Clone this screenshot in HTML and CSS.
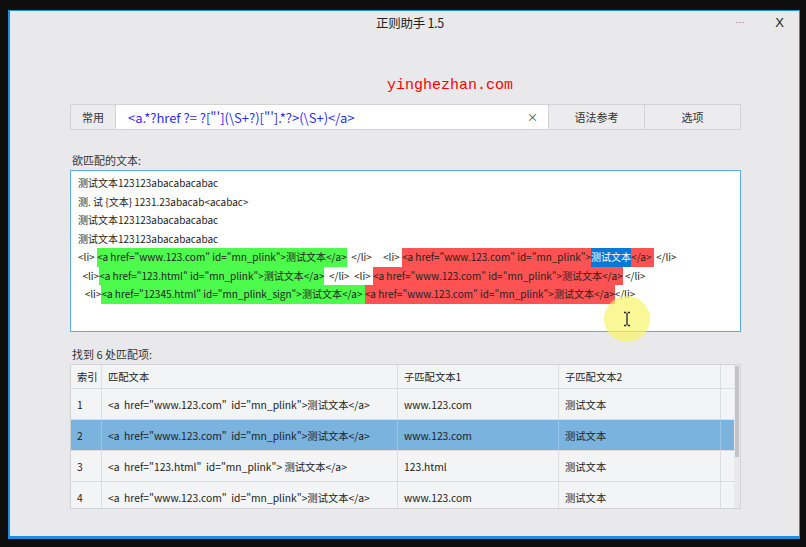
FILE: index.html
```html
<!DOCTYPE html>
<html lang="zh-CN">
<head>
<meta charset="utf-8">
<title>正则助手 1.5</title>
<link rel="stylesheet" href="styles.css">
</head>
<body>
<div class="window">
  <div class="titlebar">
    <div></div>
    <div class="title">正则助手 1.5</div>
    <div class="controls"><span class="min">…</span><span class="close">X</span></div>
  </div>
  <div class="content">
    <div class="watermark">yinghezhan.com</div>
    <div class="toolbar">
      <div class="btn btn-common">常用</div>
      <div class="pattern"><span class="pattern-text">&lt;a.*?href ?= ?["'](\S+?)["'].*?&gt;(\S+)&lt;/a&gt;</span><span class="clear">×</span></div>
      <div class="btn btn-ref">语法参考</div>
      <div class="btn btn-opt">选项</div>
    </div>
    <div class="label">欲匹配的文本:</div>
    <div class="editor">
      <div class="line"><span class="seg">测试文本123123abacabacabac</span></div>
      <div class="line"><span class="seg">测. 试 {文本} 1231.23abacab&lt;acabac&gt;</span></div>
      <div class="line"><span class="seg">测试文本123123abacabacabac</span></div>
      <div class="line"><span class="seg">测试文本123123abacabacabac</span></div>
      <div class="line"><span class="seg">&lt;li&gt; </span><span class="seg green">&lt;a href="www.123.com" id="mn_plink"&gt;测试文本&lt;/a&gt;</span><span class="seg">  &lt;/li&gt;     &lt;li&gt; </span><span class="seg red">&lt;a href="www.123.com" id="mn_plink"&gt;</span><span class="seg sel">测试文本</span><span class="seg red">&lt;/a&gt; </span><span class="seg"> &lt;/li&gt;</span></div>
      <div class="line"><span class="seg">  &lt;li&gt;</span><span class="seg green">&lt;a href="123.html" id="mn_plink"&gt;测试文本&lt;/a&gt;</span><span class="seg">  &lt;/li&gt;  &lt;li&gt; </span><span class="seg red">&lt;a href="www.123.com" id="mn_plink"&gt;测试文本&lt;/a&gt;</span><span class="seg"> &lt;/li&gt;</span></div>
      <div class="line"><span class="seg">   &lt;li&gt;</span><span class="seg green">&lt;a href="12345.html" id="mn_plink_sign"&gt;测试文本&lt;/a&gt; </span><span class="seg red">&lt;a href="www.123.com" id="mn_plink"&gt;测试文本&lt;/a&gt;</span><span class="seg">&lt;/li&gt;</span></div>
      <div class="halo">
        <svg class="ibeam" width="8" height="16" viewBox="0 0 8 16"><path d="M1 1.5h2.2M4.8 1.5H7M4 2v12M1 14.5h2.2M4.8 14.5H7" stroke="#222" stroke-width="1.3" fill="none"/></svg>
      </div>
    </div>
    <div class="label label-found">找到 6 处匹配项:</div>
    <div class="table">
      <div class="grid">
        <div class="row head"><div class="cell">索引</div><div class="cell">匹配文本</div><div class="cell">子匹配文本1</div><div class="cell">子匹配文本2</div><div class="cell"></div></div>
        <div class="row"><div class="cell">1</div><div class="cell">&lt;a  href="www.123.com"  id="mn_plink"&gt;测试文本&lt;/a&gt;</div><div class="cell">www.123.com</div><div class="cell">测试文本</div><div class="cell"></div></div>
        <div class="row selected"><div class="cell">2</div><div class="cell">&lt;a  href="www.123.com"  id="mn_plink"&gt;测试文本&lt;/a&gt;</div><div class="cell">www.123.com</div><div class="cell">测试文本</div><div class="cell"></div></div>
        <div class="row"><div class="cell">3</div><div class="cell">&lt;a  href="123.html"  id="mn_plink"&gt; 测试文本&lt;/a&gt;</div><div class="cell">123.html</div><div class="cell">测试文本</div><div class="cell"></div></div>
        <div class="row"><div class="cell">4</div><div class="cell">&lt;a  href="www.123.com"  id="mn_plink"&gt;测试文本&lt;/a&gt;</div><div class="cell">www.123.com</div><div class="cell">测试文本</div><div class="cell"></div></div>
      </div>
      <div class="scrollbar"><div class="thumb"></div></div>
    </div>
  </div>
</div>
</body>
</html>
```

FILE: styles.css
```css
* { box-sizing: border-box; }
html, body { margin: 0; padding: 0; }
body {
  background: #0e0e0e;
  width: 806px;
  height: 547px;
  overflow: hidden;
  font-family: "Noto Sans CJK SC", "Noto Sans", sans-serif;
  color: #222;
}
.window {
  margin: 10px 0 0 8px;
  width: 792px;
  height: 529px;
  background: #e9e9eb;
  border: 1px solid #1b8fe6;
  border-left-width: 2px;
  border-bottom-width: 3px;
}
.titlebar {
  height: 23px;
  display: grid;
  grid-template-columns: 1fr auto 1fr;
  align-items: center;
  padding-left: 11px;
}
.title {
  font-size: 12.5px;
  color: #222;
  letter-spacing: -0.3px;
}
.controls {
  display: flex;
  justify-content: flex-end;
  align-items: center;
  padding-right: 15px;
  gap: 31px;
}
.min { font-size: 9px; color: #777; }
.close { font-size: 13px; color: #222; font-family: "Liberation Sans", sans-serif; }
.content {
  padding: 0 58px 0 60px;
}
.watermark {
  margin-top: 44px;
  height: 16px;
  line-height: 16px;
  padding-left: 317px;
  font-family: "Liberation Mono", monospace;
  font-size: 15px;
  color: #ff0000;
}
.toolbar {
  margin-top: 10px;
  height: 26px;
  display: flex;
  border: 1px solid #d3d3d5;
  background: #d3d3d5;
  font-size: 11px;
}
.btn {
  background: #ececee;
  display: flex;
  align-items: center;
  justify-content: center;
  color: #333;
}
.btn-common { width: 44px; margin-right: 1px; }
.pattern {
  width: 432px;
  background: #fff;
  display: flex;
  align-items: center;
  justify-content: space-between;
  padding: 0 10px 0 12px;
  margin-right: 1px;
}
.pattern-text {
  color: #2b2bff;
  font-size: 13px;
  white-space: pre;
}
.clear { color: #444; font-size: 11px; }
.btn-ref { width: 95px; margin-right: 1px; }
.btn-opt { flex: 1; }
.label {
  margin-top: 22px;
  height: 16px;
  line-height: 16px;
  font-size: 11px;
  color: #333;
  padding-left: 2px;
}
.label-found { margin-top: 14px; }
.editor {
  position: relative;
  margin-top: 2px;
  height: 162px;
  background: #fff;
  border: 1px solid #5aaeea;
  padding: 3px 0 0 7px;
  font-size: 10px;
  color: #222;
}
.line {
  height: 18.5px;
  white-space: pre;
}
.seg {
  display: inline-block;
  line-height: 18.5px;
  height: 18.5px;
  vertical-align: top;
  white-space: pre;
}
.green { background: #4dfb4d; }
.red { background: #ff5252; }
.sel { background: #0a78d7; color: #fff; }
.halo {
  position: absolute;
  left: 533px;
  top: 125px;
  width: 46px;
  height: 46px;
  border-radius: 50%;
  background: rgba(248, 244, 100, 0.68);
  display: flex;
  align-items: center;
  justify-content: center;
}
.table {
  margin-top: 2px;
  height: 145px;
  border: 1px solid #d3d3d5;
  background: #f3f4f6;
  display: flex;
  overflow: hidden;
  font-size: 10.3px;
}
.grid { flex: 1; }
.row {
  display: grid;
  grid-template-columns: 31px 296px 161px 162px 1fr;
  height: 31px;
  border-bottom: 1px solid #dcdcde;
}
.row.head { height: 24px; }
.cell {
  border-right: 1px solid #dcdcde;
  padding-left: 6px;
  display: flex;
  align-items: center;
  white-space: pre;
  overflow: hidden;
  color: #222;
}
.cell:last-child { border-right: none; }
.row.selected { background: #7ab3de; }
.row.selected .cell { border-right-color: #9cc6e6; }
.scrollbar {
  width: 6px;
  background: #e9e9eb;
  padding: 1px 1px 0 1px;
}
.thumb {
  height: 91px;
  background: #c3c3c5;
}
```
